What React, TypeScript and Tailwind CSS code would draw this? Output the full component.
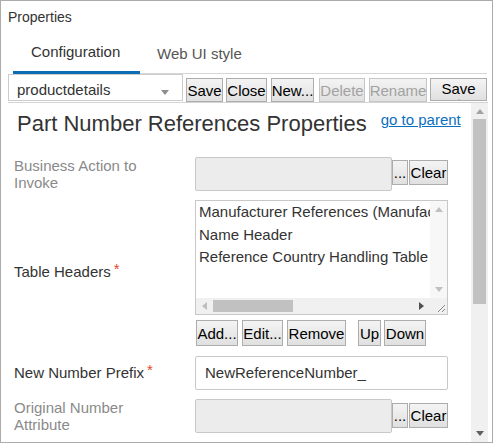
import React from "react";

const Up = ({ c = "#a3a3a3" }: { c?: string }) => (
  <svg width="8" height="5" viewBox="0 0 8 5"><polygon points="0,5 8,5 4,0" fill={c} /></svg>
);
const Down = ({ c = "#a3a3a3" }: { c?: string }) => (
  <svg width="8" height="5" viewBox="0 0 8 5"><polygon points="0,0 8,0 4,5" fill={c} /></svg>
);
const Left = ({ c = "#a3a3a3" }: { c?: string }) => (
  <svg width="5" height="8" viewBox="0 0 5 8"><polygon points="5,0 5,8 0,4" fill={c} /></svg>
);
const Right = ({ c = "#505050" }: { c?: string }) => (
  <svg width="5" height="8" viewBox="0 0 5 8"><polygon points="0,0 0,8 5,4" fill={c} /></svg>
);

function Btn({
  children,
  className = "",
  disabled = false,
}: {
  children: React.ReactNode;
  className?: string;
  disabled?: boolean;
}) {
  return (
    <div
      className={`flex shrink-0 items-center justify-center overflow-hidden whitespace-nowrap border bg-linear-to-b from-[#f4f4f4] to-[#e0e0e0] text-[15px] leading-none ${
        disabled ? "border-[#c6c6c6] text-[#a2a2a2]" : "border-[#adadad] text-black"
      } ${className}`}
    >
      {children}
    </div>
  );
}

export default function App() {
  return (
    <div className="relative flex h-[443px] w-[493px] flex-col overflow-hidden border border-[#ababab] bg-white font-['Liberation_Sans',Arial,sans-serif] text-[#333]">
      <div className="pl-[7px] pt-[8px] text-[14px] leading-[17px] text-[#333]">Properties</div>

      {/* tabs */}
      <div className="ml-[12px] mr-[5px] flex h-[48px] items-end border-b border-[#d6d6d6]">
        <div className="-mb-px w-[127px] border-b-[3px] border-[#0b6db4] pb-[11px] pl-[18px] text-[15px] leading-[17px] text-[#333]">
          Configuration
        </div>
        <div className="pb-[11px] pl-[17px] text-[15px] leading-[17px] text-[#555]">Web UI style</div>
      </div>

      {/* toolbar */}
      <div className="ml-[7px] flex h-[28px] items-start">
        <div className="relative flex h-[27px] w-[175px] shrink-0 items-center border border-[#cccccc] bg-white pl-[8px] pt-[3px] text-[15px] leading-none text-[#333]">
          productdetails
          <div className="absolute left-[152px] top-[15px] flex">
            <Down c="#8d8d8d" />
          </div>
        </div>
        <Btn className="ml-[3px] mt-[4px] h-[24px] w-[37px]">Save</Btn>
        <Btn className="ml-[3px] mt-[4px] h-[24px] w-[41px]">Close</Btn>
        <Btn className="ml-[4px] mt-[4px] h-[24px] w-[43px]">New...</Btn>
        <Btn disabled className="ml-[5px] mt-[4px] h-[24px] w-[46px]">Delete</Btn>
        <Btn disabled className="ml-[4px] mt-[4px] h-[24px] w-[58px]">Rename</Btn>
        <div className="ml-[3px] mt-[4px] flex h-[23px] w-[57px] shrink-0 flex-col items-center overflow-hidden border border-[#adadad] bg-linear-to-b from-[#f4f4f4] to-[#e0e0e0] text-[15px] leading-[17px] text-black">
          <span className="pt-[1px]">Save</span>
          <svg width="6" height="3" viewBox="0 0 6 3" className="mt-[2px]">
            <rect x="0" y="1" width="1" height="2" fill="#444" />
            <rect x="4" y="1" width="1" height="2" fill="#444" />
          </svg>
        </div>
      </div>

      {/* content */}
      <div className="ml-[7px] mr-[4px] flex min-h-0 flex-1 border-t border-[#d4d4d4]">
        <div className="flex min-w-0 flex-1 flex-col overflow-hidden">
          <div className="mt-[8px] flex items-start pl-[9px]">
            <div className="whitespace-nowrap text-[22px] leading-[25px] text-[#333]">
              Part Number References Properties
            </div>
            <a className="ml-[14px] whitespace-nowrap text-[15px] leading-[17px] text-[#0b6fc0] underline">go to parent</a>
          </div>

          <div className="ml-[6px] mt-[21px] flex flex-col">
            {/* row 1 */}
            <div className="flex h-[34px]">
              <div className="flex w-[181px] shrink-0 items-center">
                <div className="w-[160px] text-[15px] leading-[17px] text-[#8a8a8a]">Business Action to Invoke</div>
              </div>
              <div className="h-[34px] w-[197px] shrink-0 rounded-[2px] border border-[#c8c8c8] bg-[#ececec]" />
              <Btn className="mt-[3px] h-[25px] w-[16px] items-end pb-[4px] text-[11px]">...</Btn>
              <Btn className="ml-[1px] mt-[3px] h-[25px] w-[39px]">Clear</Btn>
            </div>

            {/* row 2 */}
            <div className="mt-[9px] flex">
              <div className="flex w-[181px] shrink-0 items-center pb-[4px]">
                <div className="text-[15px] leading-[17px] text-[#333]">
                  Table Headers<span className="relative top-[-3px] ml-[3px] text-[#e2492b]">*</span>
                </div>
              </div>
              <div className="flex flex-col">
                <div className="relative h-[115px] w-[253px] border border-[#c8c8c8] bg-white">
                  <div className="absolute left-0 top-0 h-[97px] w-[234px] overflow-hidden pl-[3px] text-[15px] leading-[22.5px] text-[#333]">
                    <div className="whitespace-nowrap">Manufacturer References (Manufacturer References)</div>
                    <div className="whitespace-nowrap">Name Header</div>
                    <div className="whitespace-nowrap">Reference Country Handling Table</div>
                  </div>
                  {/* vertical scrollbar */}
                  <div className="absolute right-0 top-0 flex h-[97px] w-[17px] flex-col items-center justify-between bg-[#f7f7f7] py-[6px]">
                    <Up c="#c0c0c0" />
                    <Down c="#c0c0c0" />
                  </div>
                  {/* horizontal scrollbar */}
                  <div className="absolute bottom-0 left-0 flex h-[16px] w-[234px] items-center bg-[#f0f0f0]">
                    <div className="ml-[6px] flex">
                      <Left c="#bdbdbd" />
                    </div>
                    <div className="ml-[6px] h-[12px] w-[80px] bg-[#c1c1c1]" />
                    <div className="ml-auto mr-[6px] flex">
                      <Right />
                    </div>
                  </div>
                  <div className="absolute bottom-0 right-0 h-[16px] w-[17px] bg-[#f0f0f0]">
                    <svg width="17" height="16" viewBox="0 0 17 16">
                      <line x1="15" y1="7" x2="8" y2="14" stroke="#8a8a8a" strokeWidth="1" />
                      <line x1="15" y1="11" x2="12" y2="14" stroke="#8a8a8a" strokeWidth="1" />
                    </svg>
                  </div>
                </div>
                <div className="mt-[5px] flex h-[27px] items-start">
                  <Btn className="ml-[1px] h-[26px] w-[42px]">Add...</Btn>
                  <Btn className="ml-[4px] h-[26px] w-[41px]">Edit...</Btn>
                  <Btn className="ml-[4px] h-[26px] w-[59px]">Remove</Btn>
                  <Btn className="ml-[12px] h-[26px] w-[23px]">Up</Btn>
                  <Btn className="ml-[3px] h-[26px] w-[42px]">Down</Btn>
                </div>
              </div>
            </div>

            {/* row 3 */}
            <div className="mt-[9px] flex h-[34px]">
              <div className="flex w-[181px] shrink-0 items-center pb-[2px]">
                <div className="text-[15px] leading-[17px] text-[#333]">
                  New Number Prefix<span className="relative top-[-3px] ml-[3px] text-[#e2492b]">*</span>
                </div>
              </div>
              <div className="flex h-[34px] w-[253px] shrink-0 items-center rounded-[2px] border border-[#c8c8c8] bg-white pl-[9px] text-[15px] text-[#333]">
                NewReferenceNumber_
              </div>
            </div>

            {/* row 4 */}
            <div className="mt-[9px] flex h-[34px]">
              <div className="flex w-[181px] shrink-0 items-center">
                <div className="w-[160px] text-[15px] leading-[17px] text-[#8a8a8a]">Original Number Attribute</div>
              </div>
              <div className="h-[34px] w-[197px] shrink-0 rounded-[2px] border border-[#c8c8c8] bg-[#ececec]" />
              <Btn className="mt-[4px] h-[25px] w-[16px] items-end pb-[4px] text-[11px]">...</Btn>
              <Btn className="ml-[1px] mt-[4px] h-[25px] w-[39px]">Clear</Btn>
            </div>
          </div>
        </div>

        {/* main scrollbar */}
        <div className="flex w-[17px] shrink-0 flex-col items-center bg-[#f0f0f0] pb-[6px]">
          <div className="mt-[6px] flex">
            <Up />
          </div>
          <div className="mt-[5px] h-[185px] w-[13px] bg-[#c1c1c1]" />
          <div className="mt-auto flex">
            <Down c="#606060" />
          </div>
        </div>
      </div>
    </div>
  );
}
